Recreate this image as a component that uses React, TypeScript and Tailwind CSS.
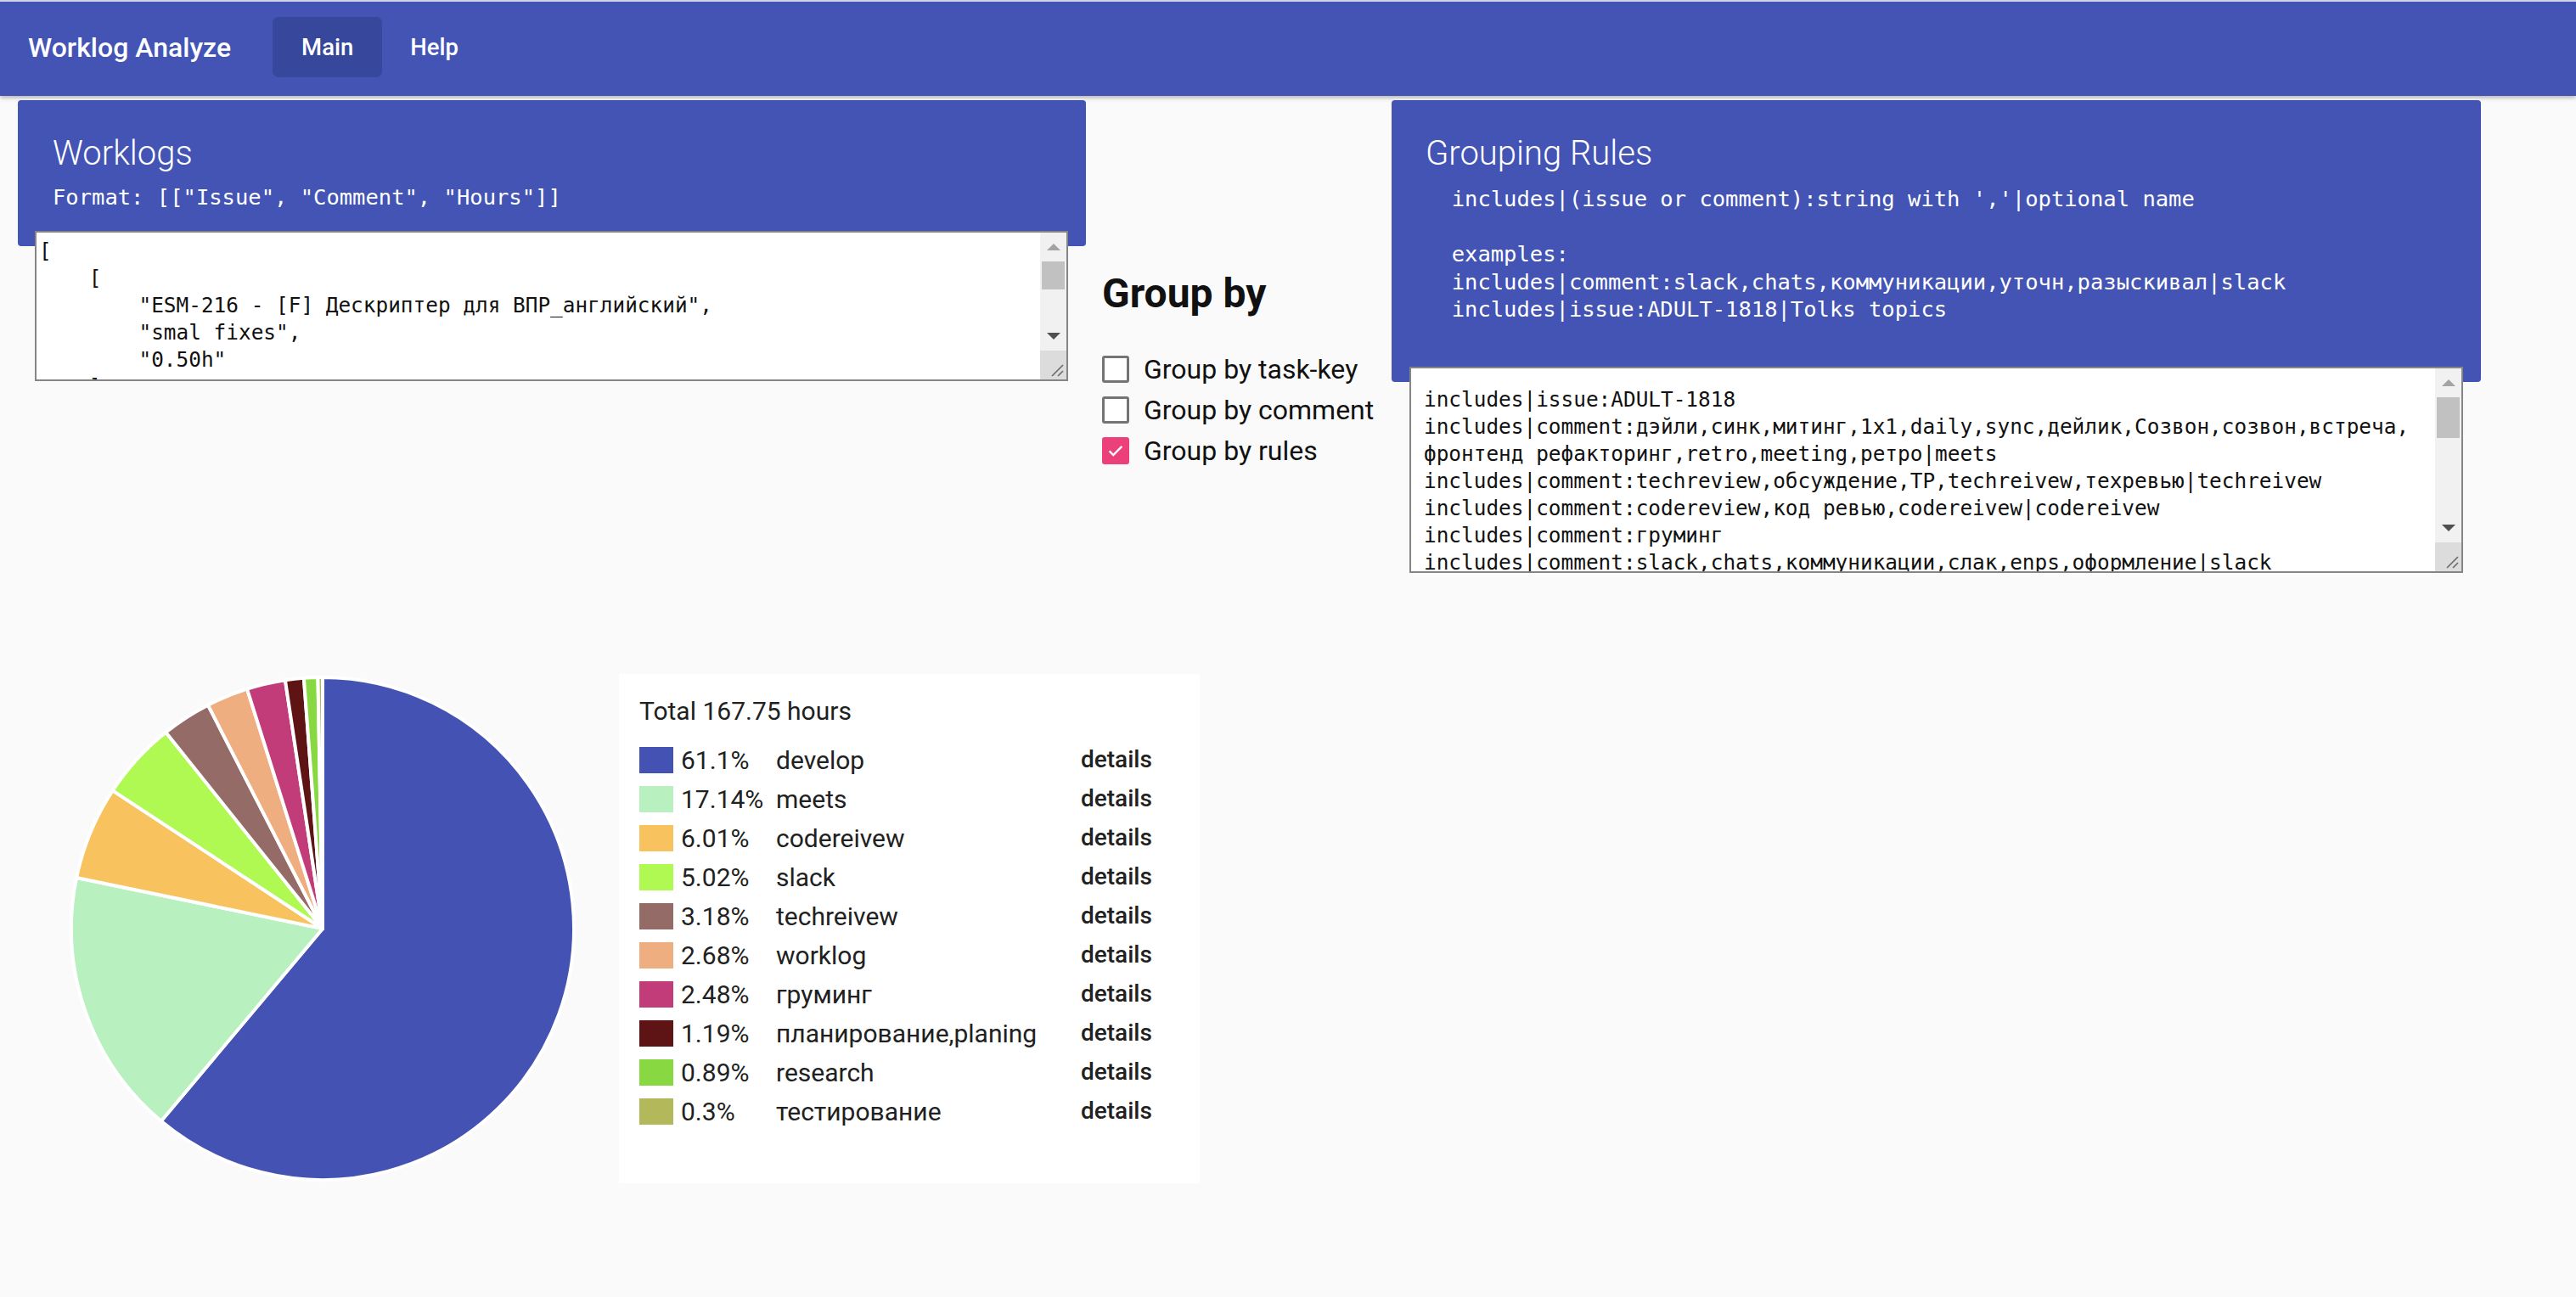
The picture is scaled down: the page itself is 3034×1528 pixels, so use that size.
import React from "react";

type Slice = { pct: number; name: string; color: string };

const slices: Slice[] = [
  { pct: 61.1, name: "develop", color: "#4453b3" },
  { pct: 17.14, name: "meets", color: "#b8f0c0" },
  { pct: 6.01, name: "codereivew", color: "#f8c35e" },
  { pct: 5.02, name: "slack", color: "#b0f852" },
  { pct: 3.18, name: "techreivew", color: "#946b66" },
  { pct: 2.68, name: "worklog", color: "#eeae80" },
  { pct: 2.48, name: "груминг", color: "#c13c78" },
  { pct: 1.19, name: "планирование,planing", color: "#5e1414" },
  { pct: 0.89, name: "research", color: "#88d842" },
  { pct: 0.3, name: "тестирование", color: "#b3b85a" },
];

const worklogsText = `[
    [
        "ESM-216 - [F] Дескриптер для ВПР_английский",
        "smal fixes",
        "0.50h"
    ],
    [
        "ESM-216 - [F] Дескриптер для ВПР_английский",
        "дэйли",
        "0.25h"
    ],
    [
        "ADULT-1818 - Tolks topics",
        "груминг",
        "1.00h"
    ]
]`;

const rulesText = `includes|issue:ADULT-1818
includes|comment:дэйли,синк,митинг,1x1,daily,sync,дейлик,Созвон,созвон,встреча, фронтенд рефакторинг,retro,meeting,ретро|meets
includes|comment:techreview,обсуждение,TP,techreivew,техревью|techreivew
includes|comment:codereview,код ревью,codereivew|codereivew
includes|comment:груминг
includes|comment:slack,chats,коммуникации,слак,enps,оформление|slack
includes|comment:worklog,ворклог,списание|worklog
includes|comment:планирование,planing|планирование,planing
includes|comment:research,исследование,ресерч|research
includes|comment:тестирование,testing,тест|тестирование
includes|comment:develop,разработка,fix,fixes|develop
includes|issue:ESM|develop
includes|issue:ADULT|develop`;

function Pie() {
  const cx = 300;
  const cy = 300;
  const r = 296;
  const total = slices.reduce((s, x) => s + x.pct, 0);
  let acc = 0;
  return (
    <svg width="600" height="600" viewBox="0 0 600 600">
      {slices.map((s) => {
        const a0 = (acc / total) * Math.PI * 2 - Math.PI / 2;
        acc += s.pct;
        const a1 = (acc / total) * Math.PI * 2 - Math.PI / 2;
        const x0 = cx + r * Math.cos(a0);
        const y0 = cy + r * Math.sin(a0);
        const x1 = cx + r * Math.cos(a1);
        const y1 = cy + r * Math.sin(a1);
        const large = a1 - a0 > Math.PI ? 1 : 0;
        return (
          <path
            key={s.name}
            d={`M${cx},${cy} L${x0},${y0} A${r},${r} 0 ${large} 1 ${x1},${y1} Z`}
            fill={s.color}
            stroke="#ffffff"
            strokeWidth={4}
            strokeLinejoin="round"
          />
        );
      })}
    </svg>
  );
}

// classic scrollbar drawn over the right edge of a textarea
function Scrollbar({ thumb }: { thumb: number }) {
  return (
    <div className="absolute top-[2px] right-[2px] bottom-[2px] flex w-[31px] flex-col bg-[#f1f1f1]">
      <div className="flex h-[34px] items-center justify-center">
        <svg width="16" height="8" viewBox="0 0 16 8">
          <path d="M0 8L8 0L16 8Z" fill="#a3a3a3" />
        </svg>
      </div>
      <div className="flex-1">
        <div className="mx-[2px] bg-[#c1c1c1]" style={{ height: thumb }} />
      </div>
      <div className="flex h-[34px] items-center justify-center">
        <svg width="16" height="8" viewBox="0 0 16 8">
          <path d="M0 0L16 0L8 8Z" fill="#505050" />
        </svg>
      </div>
      <div className="flex h-[34px] items-end justify-end bg-[#dcdcdc] p-[3px]">
        <svg width="18" height="18" viewBox="0 0 18 18">
          <path d="M17 4L4 17M17 11L11 17" stroke="#6b6b6b" strokeWidth={1.6} />
        </svg>
      </div>
    </div>
  );
}

function Checkbox({ label, checked }: { label: string; checked?: boolean }) {
  return (
    <label className="flex h-[48px] items-center gap-[17px]">
      {checked ? (
        <span className="flex h-[32px] w-[32px] items-center justify-center rounded-[3px] bg-[#ec407a]">
          <svg width="22" height="22" viewBox="0 0 24 24">
            <path
              d="M4 12.5l5 5L20 6.5"
              fill="none"
              stroke="#ffffff"
              strokeWidth={2.6}
            />
          </svg>
        </span>
      ) : (
        <span className="h-[32px] w-[32px] rounded-[3px] border-[3px] border-[#747474] bg-white" />
      )}
      <span className="text-[32px] text-[#111111]">{label}</span>
    </label>
  );
}

export default function App() {
  return (
    <div className="min-h-[1528px] bg-[#fafafa] font-['Roboto','Noto_Sans',sans-serif]">
      <header className="relative z-10 flex h-[113px] items-center border-t-2 border-[#cfd2e8] bg-[#4354b4] pl-[33px] pb-[4px] shadow-[0_2px_5px_rgba(0,0,0,0.3)]">
        <div className="text-[32px] font-medium text-white">Worklog Analyze</div>
        <nav className="ml-[49px] flex">
          <button className="h-[71px] rounded-[7px] bg-[#37479b] px-[34px] text-[27.5px] font-medium text-white">
            Main
          </button>
          <button className="h-[71px] px-[33px] text-[27.5px] font-medium text-white">
            Help
          </button>
        </nav>
      </header>

      <main className="pt-[5px]">
        <div className="flex items-start pl-[21px]">
          <section className="w-[1258px]">
            <div className="h-[172px] rounded-[4px] bg-[#4354b4] pl-[41px] pt-[39px] text-white">
              <h2 className="text-[40px] font-light leading-[47px]">Worklogs</h2>
              <pre className="mt-[12px] font-['DejaVu_Sans_Mono',monospace] text-[25.5px] leading-[33px]">
                {`Format: [["Issue", "Comment", "Hours"]]`}
              </pre>
            </div>
            <div className="relative -mt-[18px] ml-[20px] h-[177px] w-[1217px]">
              <textarea
                defaultValue={worklogsText}
                spellCheck={false}
                className="block h-full w-full resize-none overflow-hidden border-2 border-[#858585] bg-white pl-[3px] pr-[36px] pt-[6px] font-['DejaVu_Sans_Mono',monospace] text-[24.4px] leading-[32px] text-[#111111] outline-none"
              />
              <Scrollbar thumb={33} />
            </div>
          </section>

          <section className="ml-[19px] w-[341px] pt-[204px]">
            <h3 className="text-[48px] font-bold leading-[48px] text-[#111111]">Group by</h3>
            <div className="mt-[41px] flex flex-col">
              <Checkbox label="Group by task-key" />
              <Checkbox label="Group by comment" />
              <Checkbox label="Group by rules" checked />
            </div>
          </section>

          <section className="w-[1283px]">
            <div className="h-[332px] rounded-[4px] bg-[#4354b4] pl-[40px] pt-[39px] text-white">
              <h2 className="text-[40px] font-light leading-[47px]">Grouping Rules</h2>
              <pre className="mt-[14px] font-['DejaVu_Sans_Mono',monospace] text-[25.5px] leading-[32.5px]">
                {`  includes|(issue or comment):string with ','|optional name

  examples:
  includes|comment:slack,chats,коммуникации,уточн,разыскивал|slack
  includes|issue:ADULT-1818|Tolks topics`}
              </pre>
            </div>
            <div className="relative -mt-[18px] ml-[21px] h-[243px] w-[1241px]">
              <textarea
                defaultValue={rulesText}
                spellCheck={false}
                className="block h-full w-full resize-none overflow-hidden border-2 border-[#858585] bg-white pl-[15px] pr-[36px] pt-[21px] font-['DejaVu_Sans_Mono',monospace] text-[24.4px] leading-[32px] text-[#111111] outline-none"
              />
              <Scrollbar thumb={48} />
            </div>
          </section>
        </div>

        <div className="mt-[119px] flex items-start pl-[80px]">
          <Pie />
          <div className="ml-[49px] h-[600px] w-[684px] bg-white pl-[24px] pt-[26px] text-[#212121]">
            <div className="text-[30px] leading-[35px]">Total 167.75 hours</div>
            <div className="mt-[17px] grid grid-cols-[49px_112px_359px_auto]">
              {slices.map((s) => (
                <React.Fragment key={s.name}>
                  <div className="flex h-[46px] items-center">
                    <span
                      className="block h-[31px] w-[40px]"
                      style={{ background: s.color }}
                    />
                  </div>
                  <div className="flex h-[46px] items-center text-[30px]">{s.pct}%</div>
                  <div className="flex h-[46px] items-center whitespace-nowrap text-[30px]">
                    {s.name}
                  </div>
                  <div className="flex h-[46px] items-center text-[28px] font-medium">
                    details
                  </div>
                </React.Fragment>
              ))}
            </div>
          </div>
        </div>
      </main>
    </div>
  );
}
